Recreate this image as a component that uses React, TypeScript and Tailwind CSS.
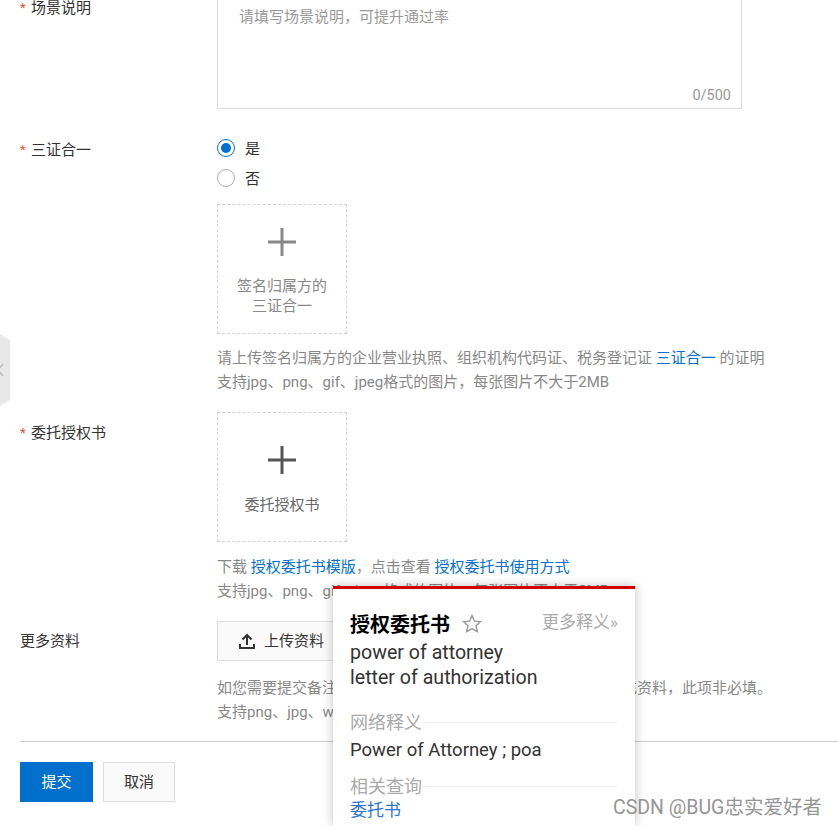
const FONT = 'font-["Roboto","Noto_Sans_CJK_SC",sans-serif]';

function Label({ text, required = true }: { text: string; required?: boolean }) {
  return (
    <div className="w-[197px] shrink-0 flex text-[15px] leading-[24px] text-[#333]">
      {required && <span className="w-[11px] text-[#f04d3e] text-[13px]">*</span>}
      <span>{text}</span>
    </div>
  );
}

function Plus({ dark }: { dark?: boolean }) {
  return (
    <svg width="28" height="28" viewBox="0 0 28 28" className={dark ? 'text-[#555]' : 'text-[#888]'}>
      <path d="M14 0v28M0 14h28" stroke="currentColor" strokeWidth="3" />
    </svg>
  );
}

function UploadBox({ lines, dark }: { lines: string[]; dark?: boolean }) {
  return (
    <div
      className={`w-[130px] h-[130px] border border-dashed border-[#d4d4d4] flex flex-col items-center ${
        dark ? 'pt-[33px]' : 'pt-[23px]'
      }`}
    >
      <Plus dark={dark} />
      <div
        className={`text-center text-[15px] leading-[20px] ${dark ? 'mt-[21px] text-[#666]' : 'mt-[20px] text-[#888]'}`}
      >
        {lines.map((l) => (
          <div key={l}>{l}</div>
        ))}
      </div>
    </div>
  );
}

function Radio({ checked, text }: { checked?: boolean; text: string }) {
  return (
    <div className="flex items-center h-[30px] text-[15px] text-[#333]">
      <span
        className={`w-[18px] h-[18px] rounded-full border flex items-center justify-center ${
          checked ? 'border-[#0070cc]' : 'border-[#aaa]'
        }`}
      >
        {checked && <span className="w-[10px] h-[10px] rounded-full bg-[#0070cc]" />}
      </span>
      <span className="ml-[10px] pt-[2px]">{text}</span>
    </div>
  );
}

function SectionTitle({ text }: { text: string }) {
  return (
    <div className="flex items-center text-[18px] leading-[26px] text-[#aaa]">
      <span>{text}</span>
      <span className="flex-1 h-px mb-[2px] bg-[#eee]" />
    </div>
  );
}

export default function App() {
  return (
    <div className={`relative w-[838px] h-[826px] overflow-hidden bg-white ${FONT}`}>
      <div className="pl-5">
        <div className="flex h-[109px]">
          <div className="-mt-[4px]">
            <Label text="场景说明" />
          </div>
          <div className="relative w-[525px] border-x border-b border-[#ddd] pl-[21px] pt-[5px] text-[15px] leading-[24px] text-[#999]">
            请填写场景说明，可提升通过率
            <span className="absolute right-[10px] bottom-[0px] text-[14.5px] text-[#999]">0/500</span>
          </div>
        </div>

        <div className="flex mt-[24px]">
          <div className="pt-[5px]">
            <Label text="三证合一" />
          </div>
          <div>
            <Radio checked text="是" />
            <Radio text="否" />
            <div className="mt-[11px]">
              <UploadBox lines={['签名归属方的', '三证合一']} />
            </div>
            <div className="mt-[12px] text-[15px] leading-[24px] text-[#888] whitespace-nowrap">
              <div>
                请上传签名归属方的企业营业执照、组织机构代码证、税务登记证{' '}
                <span className="text-[#0070cc]">三证合一</span> 的证明
              </div>
              <div>支持jpg、png、gif、jpeg格式的图片，每张图片不大于2MB</div>
            </div>
          </div>
        </div>

        <div className="flex mt-[18px]">
          <div className="pt-[9px]">
            <Label text="委托授权书" />
          </div>
          <div>
            <UploadBox dark lines={['委托授权书']} />
            <div className="mt-[13px] text-[15px] leading-[24px] text-[#888] whitespace-nowrap">
              <div>
                下载 <span className="text-[#0070cc]">授权委托书模版</span>，点击查看{' '}
                <span className="text-[#0070cc]">授权委托书使用方式</span>
              </div>
              <div>支持jpg、png、gif、jpeg格式的图片，每张图片不大于2MB</div>
            </div>
          </div>
        </div>

        <div className="flex mt-[18px]">
          <div className="pt-[8px]">
            <Label text="更多资料" required={false} />
          </div>
          <div>
            <div className="w-[150px] h-[40px] border border-[#ddd] bg-[#fafafa] flex items-center pl-[21px] text-[15px] text-[#333]">
              <svg width="16" height="16" viewBox="0 0 16 16" className="mr-[9px]">
                <path
                  d="M8 12V2M3.500 6.500L8 2l4.500 4.500M1 11v4h14v-4"
                  fill="none"
                  stroke="currentColor"
                  strokeWidth="2"
                />
              </svg>
              上传资料
            </div>
            <div className="mt-[15px] text-[15px] leading-[24px] text-[#888] whitespace-nowrap">
              <div>如您需要提交备注说明或其他补充材料，可在此处上传相关补充资料，此项非必填。</div>
              <div>支持png、jpg、word、pdf格式的文件</div>
            </div>
          </div>
        </div>

        <div className="mt-[17px] h-px bg-[#ccc]" />

        <div className="flex mt-[20px] gap-[10px]">
          <button className="w-[73px] h-[40px] bg-[#0070cc] text-white text-[15px]">提交</button>
          <button className="w-[72px] h-[40px] border border-[#ddd] bg-[#fafafa] text-[#333] text-[15px]">取消</button>
        </div>
      </div>

      <svg width="11" height="72" viewBox="0 0 11 72" className="absolute left-0 top-[334px]">
        <path d="M0 0l10 6v60L0 72z" fill="#e8e8e8" />
        <path d="M3 30l-5 6 5 6" fill="none" stroke="#bbb" strokeWidth="1.500" />
      </svg>

      <div className="absolute left-[333px] top-[586px] w-[302px] h-[240px] bg-white border-t-[3px] border-[#d00000] shadow-[0_0_10px_rgba(0,0,0,0.25)] px-[17px] pt-[20px]">
        <div className="flex items-center h-[30px]">
          <span className="text-[20px] font-bold text-black mt-[1px]">授权委托书</span>
          <svg width="20" height="20" viewBox="0 0 20 20" className="ml-[12px] -mt-[1px]">
            <path
              d="M10 1.500l2.500 5.600 6 .6-4.500 4 1.300 6-5.300-3.100-5.300 3.100 1.300-6-4.500-4 6-.6z"
              fill="none"
              stroke="#999"
              strokeWidth="1.400"
            />
          </svg>
          <span className="ml-auto text-[17px] text-[#aaa] -mt-[2px]">更多释义»</span>
        </div>
        <div className="mt-[1px] text-[19.6px] leading-[25px] text-[#333]">
          <div>power of attorney</div>
          <div>letter of authorization</div>
        </div>
        <div className="mt-[20px]">
          <SectionTitle text="网络释义" />
        </div>
        <div className="text-[18.5px] leading-[28px] text-[#333]">Power of Attorney ; poa</div>
        <div className="mt-[10px]">
          <SectionTitle text="相关查询" />
        </div>
        <div className="-mt-[1px] text-[17px] leading-[22px] text-[#2b75d6]">委托书</div>
      </div>

      <div className="absolute left-[613px] top-[795px] text-[19.500px] leading-[26px] text-[#8a8a8a] opacity-90">
        CSDN @BUG忠实爱好者
      </div>
    </div>
  );
}
